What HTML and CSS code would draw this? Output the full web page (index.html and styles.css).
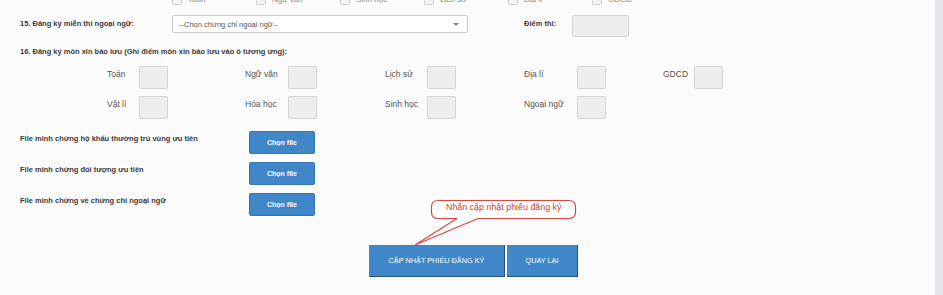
FILE: index.html
```html
<!DOCTYPE html>
<html lang="vi">
<head>
    <meta charset="UTF-8">
    <meta name="viewport" content="width=device-width, initial-scale=1.0">
    <title>Phiếu đăng ký</title>
    <link rel="stylesheet" href="styles.css">
</head>
<body>
    <div class="page">
        <div class="content">
            <!-- previous section, scrolled out of view -->
            <div class="checks">
                <label class="check"><span class="box"></span>Toán</label>
                <label class="check"><span class="box"></span>Ngữ văn</label>
                <label class="check"><span class="box"></span>Sinh học</label>
                <label class="check"><span class="box"></span>Lịch sử</label>
                <label class="check"><span class="box"></span>Địa lí</label>
                <label class="check"><span class="box"></span>GDCD</label>
            </div>

            <div class="row-lang">
                <div class="form-label label-lang">15. Đăng ký miễn thi ngoại ngữ:</div>
                <div class="select">
                    <span>--Chọn chứng chỉ ngoại ngữ--</span>
                    <span class="caret"></span>
                </div>
                <div class="form-label label-score">Điểm thi:</div>
                <div class="input input-score"></div>
            </div>

            <div class="form-label heading">16. Đăng ký môn xin bảo lưu (Ghi điểm môn xin bảo lưu vào ô tương ứng):</div>

            <div class="subjects">
                <span class="subj">Toán</span><span class="cell"><span class="input"></span></span>
                <span class="subj">Ngữ văn</span><span class="cell"><span class="input"></span></span>
                <span class="subj">Lịch sử</span><span class="cell"><span class="input"></span></span>
                <span class="subj">Địa lí</span><span class="cell"><span class="input"></span></span>
                <span class="subj">GDCD</span><span class="cell"><span class="input"></span></span>

                <span class="subj">Vật lí</span><span class="cell"><span class="input"></span></span>
                <span class="subj">Hóa học</span><span class="cell"><span class="input"></span></span>
                <span class="subj">Sinh học</span><span class="cell"><span class="input"></span></span>
                <span class="subj">Ngoại ngữ</span><span class="cell"><span class="input"></span></span>
            </div>

            <div class="files">
                <div class="file-row">
                    <div class="form-label file-label">File minh chứng hộ khẩu thường trú vùng ưu tiên</div>
                    <button class="btn btn-file">Chọn file</button>
                </div>
                <div class="file-row">
                    <div class="form-label file-label">File minh chứng đối tượng ưu tiên</div>
                    <button class="btn btn-file">Chọn file</button>
                </div>
                <div class="file-row">
                    <div class="form-label file-label">File minh chứng về chứng chỉ ngoại ngữ</div>
                    <button class="btn btn-file">Chọn file</button>
                </div>
            </div>

            <div class="actions">
                <button class="btn btn-action btn-update">CẬP NHẬT PHIẾU ĐĂNG KÝ</button>
                <button class="btn btn-action btn-back">QUAY LẠI</button>
            </div>

            <!-- annotation over the screenshot -->
            <div class="callout">
                <svg width="175" height="56" viewBox="0 0 175 56">
                    <path d="M28 5.5 H159 Q165.5 5.5 165.5 12 V17 Q165.5 23.5 159 23.5 H68 L5 50 L47 23.5 H28 Q21.5 23.5 21.5 17 V12 Q21.5 5.5 28 5.5 Z"
                          fill="#fff" stroke="#d9463f" stroke-width="1.2" stroke-linejoin="round"/>
                </svg>
                <span class="callout-text">Nhấn cập nhật phiếu đăng ký</span>
            </div>
        </div>
        <div class="scrollbar"></div>
    </div>
</body>
</html>
```

FILE: styles.css
```css
body {
    margin: 0;
    padding: 0;
    font-family: "Liberation Sans", Arial, sans-serif;
    font-size: 8px;
    color: #333;
    background-color: #fbfbfb;
}

.page {
    display: flex;
    height: 295px;
    overflow: hidden;
}

.content {
    position: relative;
    flex-grow: 1;
}

.scrollbar {
    width: 8px;
    background-color: #e3e5e8;
}

/* cut-off checkbox row */
.checks {
    display: flex;
    align-items: flex-end;
    height: 5px;
    padding-left: 172px;
    overflow: hidden;
}

.check {
    display: flex;
    align-items: center;
    flex-shrink: 0;
    width: 84px;
    height: 12px;
    font-size: 8px;
    color: #888;
}

.check .box {
    box-sizing: border-box;
    width: 10px;
    height: 12px;
    margin-right: 6px;
    border: 1px solid #ccc;
    border-radius: 2px;
    background-color: #f2f2f2;
}

.form-label {
    font-size: 7.5px;
    font-weight: bold;
    color: #3a3a3a;
}

.row-lang {
    display: flex;
    align-items: flex-start;
    margin-top: 10px;
    padding-left: 20px;
}

.label-lang {
    width: 152px;
    line-height: 18px;
}

.select {
    display: flex;
    justify-content: space-between;
    align-items: center;
    box-sizing: border-box;
    width: 296px;
    height: 18px;
    padding: 0 8px 0 6px;
    border: 1px solid #ccc;
    border-radius: 2px;
    background-color: #fff;
    font-size: 7.5px;
    color: #555;
}

.caret {
    width: 0;
    height: 0;
    border-left: 3px solid transparent;
    border-right: 3px solid transparent;
    border-top: 3px solid #888;
}

.label-score {
    margin-left: 56px;
    width: 48px;
    line-height: 18px;
}

.input {
    display: block;
    box-sizing: border-box;
    width: 29px;
    height: 23px;
    border: 1px solid #d4d4d4;
    border-radius: 2px;
    background-color: #eee;
}

.input-score {
    width: 57px;
    height: 22px;
}

.heading {
    margin-top: 8px;
    padding-left: 20px;
    line-height: 14px;
}

.subjects {
    display: grid;
    grid-template-columns: 32px 106px 43px 97px 42px 97px 53px 86px 31px 30px;
    row-gap: 7px;
    margin-top: 7px;
    padding-left: 107px;
}

.subj {
    font-size: 8.5px;
    line-height: 16px;
    color: #555;
    white-space: nowrap;
}

.files {
    display: flex;
    flex-direction: column;
    gap: 8px;
    margin-top: 12px;
    padding-left: 20px;
}

.file-row {
    display: flex;
    align-items: flex-start;
}

.file-label {
    width: 229px;
    line-height: 16px;
}

.btn {
    box-sizing: border-box;
    font-family: "Liberation Sans", Arial, sans-serif;
    color: #fff;
    background-color: #3f87c8;
    cursor: pointer;
}

.btn-file {
    width: 66px;
    height: 23px;
    padding: 0;
    font-size: 7px;
    font-weight: bold;
    border: 1px solid #3677b3;
    border-radius: 2px;
}

.actions {
    display: flex;
    gap: 2px;
    margin-top: 29px;
    padding-left: 369px;
}

.btn-action {
    height: 32px;
    padding: 0;
    font-size: 7.3px;
    border: none;
    border-right: 1px solid #24527d;
    border-bottom: 1px solid #24527d;
}

.btn-update {
    width: 136px;
}

.btn-back {
    width: 71px;
}

.callout {
    position: absolute;
    left: 410px;
    top: 195px;
    width: 175px;
    height: 56px;
}

.callout svg {
    display: block;
}

.callout-text {
    position: absolute;
    left: 36px;
    top: 7px;
    font-size: 8.9px;
    color: #d23a33;
    white-space: nowrap;
}
```
